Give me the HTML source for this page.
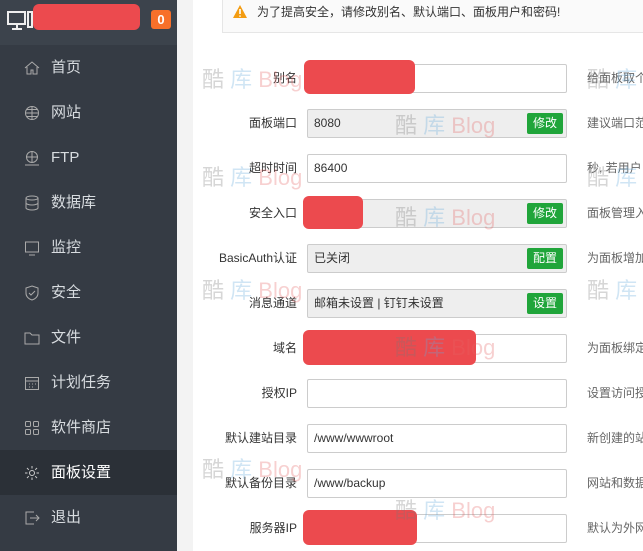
<!DOCTYPE html><html><head><meta charset="utf-8"><style>
*{margin:0;padding:0;box-sizing:border-box}
body{width:643px;height:551px;overflow:hidden;background:#fff;font-family:"Liberation Sans","Noto Sans CJK SC",sans-serif;font-size:13px;color:#333;position:relative}
.sb{position:absolute;left:0;top:0;width:177px;height:551px;background:#353b44}
.hd{position:absolute;left:0;top:0;width:177px;height:45px;background:#3c434c}
.gap{position:absolute;left:177px;top:0;width:16px;height:551px;background:#f3f3f3}
.it{position:absolute;left:0;width:177px;height:45px;color:#d8dce0;font-size:15px;line-height:45px;padding-left:51px}
.it svg{position:absolute;left:24px;top:15px}
.act{background:#2b3037;color:#fff}
.red{position:absolute;background:#ec4a4e;border-radius:6px}
.note{position:absolute;left:222px;top:-1px;width:430px;height:34px;background:#fafafa;border:1px solid #e6e6e6;font-size:12px;line-height:24px;padding-left:34px;color:#333}
.lb{position:absolute;right:346px;font-size:12px;line-height:29px;text-align:right;white-space:nowrap}
.in{position:absolute;left:307px;width:260px;height:29px;border:1px solid #ccc;border-radius:2px;font-size:12px;line-height:27px;padding-left:6px}
.g{background:#eee}
.bt{position:absolute;right:3px;top:3px;width:36px;height:21px;background:#20a53a;color:#fff;border-radius:2px;font-size:12px;line-height:21px;text-align:center}
.h{position:absolute;left:587px;font-size:12px;line-height:29px;white-space:nowrap;color:#666}
.wm{position:absolute;font-size:22px;color:rgba(120,120,120,.3);white-space:nowrap}
.wm span{color:rgba(100,170,220,.3)}.wm b{font-weight:normal;color:rgba(230,100,100,.3)}
</style></head><body>
<div class="sb"></div><div class="hd"></div>
<svg style="position:absolute;left:7px;top:10px" width="26" height="22" viewBox="0 0 26 22" fill="none" stroke="#eee" stroke-width="2"><rect x="1" y="2" width="17" height="12"/><path d="M5 19h10M10 14v5"/><rect x="21" y="2" width="4" height="15"/></svg>
<div class="red" style="left:33px;top:4px;width:107px;height:26px"></div>
<div style="position:absolute;left:151px;top:10px;width:20px;height:19px;background:#f7702a;border-radius:3px;color:#fff;font-weight:bold;font-size:13px;line-height:19px;text-align:center">0</div>
<div class="it" style="top:45px"><svg width="16" height="16" viewBox="0 0 16 16" fill="none" stroke="#aaa"><path d="M1 8L8 2l7 6M3 7v7h4v-4h2v4h4V7"/></svg>首页</div>
<div class="it" style="top:90px"><svg width="16" height="16" viewBox="0 0 16 16" fill="none" stroke="#aaa"><circle cx="8" cy="8" r="6.5"/><path d="M1.5 8h13M8 1.5v13M3 4.5h10M3 11.5h10"/></svg>网站</div>
<div class="it" style="top:135px"><svg width="16" height="16" viewBox="0 0 16 16" fill="none" stroke="#aaa"><circle cx="8" cy="7" r="5.5"/><path d="M2.5 7h11M8 1.5v11M1 15h14"/></svg>FTP</div>
<div class="it" style="top:180px"><svg width="16" height="16" viewBox="0 0 16 16" fill="none" stroke="#aaa"><ellipse cx="8" cy="3" rx="6" ry="2"/><path d="M2 3v10c0 1 3 2 6 2s6-1 6-2V3M2 8c0 1 3 2 6 2s6-1 6-2"/></svg>数据库</div>
<div class="it" style="top:225px"><svg width="16" height="16" viewBox="0 0 16 16" fill="none" stroke="#aaa"><rect x="1.5" y="2" width="13" height="10"/><path d="M5 15h6"/></svg>监控</div>
<div class="it" style="top:270px"><svg width="16" height="16" viewBox="0 0 16 16" fill="none" stroke="#aaa"><path d="M8 1l6 2v5c0 4-3 6-6 7-3-1-6-3-6-7V3z M5 8l2 2 4-4"/></svg>安全</div>
<div class="it" style="top:315px"><svg width="16" height="16" viewBox="0 0 16 16" fill="none" stroke="#aaa"><path d="M1 3h5l2 2h7v9H1z"/></svg>文件</div>
<div class="it" style="top:360px"><svg width="16" height="16" viewBox="0 0 16 16" fill="none" stroke="#aaa"><rect x="1.5" y="2.5" width="13" height="12"/><path d="M1.5 6h13M5 9h1M8 9h1M11 9h1M5 12h1M8 12h1"/></svg>计划任务</div>
<div class="it" style="top:405px"><svg width="16" height="16" viewBox="0 0 16 16" fill="none" stroke="#aaa"><rect x="1.5" y="1.5" width="5" height="5" rx="1"/><rect x="9.5" y="1.5" width="5" height="5" rx="1"/><rect x="1.5" y="9.5" width="5" height="5" rx="1"/><rect x="9.5" y="9.5" width="5" height="5" rx="1"/></svg>软件商店</div>
<div class="it act" style="top:450px"><svg width="16" height="16" viewBox="0 0 16 16" fill="none" stroke="#ccc"><circle cx="8" cy="8" r="2.5"/><path d="M8 1v2.5M8 12.5V15M1 8h2.5M12.5 8H15M3 3l1.8 1.8M11.2 11.2L13 13M3 13l1.8-1.8M11.2 4.8L13 3"/></svg>面板设置</div>
<div class="it" style="top:495px"><svg width="16" height="16" viewBox="0 0 16 16" fill="none" stroke="#aaa"><path d="M10 2H2v12h8M6 8h9M12 5l3 3-3 3"/></svg>退出</div>
<div class="gap"></div>
<div class="note"><svg style="position:absolute;left:10px;top:5px" width="14" height="13" viewBox="0 0 14 13"><path d="M7 0L14 13H0z" fill="#f39c12"/><path d="M7 4v5M7 10.5v1.3" stroke="#fff" stroke-width="1.6"/></svg>为了提高安全，请修改别名、默认端口、面板用户和密码!</div>

<div class="lb" style="top:64px">别名</div><div class="in" style="top:64px"></div><div class="h" style="top:64px">给面板取个</div>
<div class="lb" style="top:109px">面板端口</div><div class="in g" style="top:109px">8080<div class="bt">修改</div></div><div class="h" style="top:109px">建议端口范</div>
<div class="lb" style="top:154px">超时时间</div><div class="in" style="top:154px">86400</div><div class="h" style="top:154px">秒, 若用户</div>
<div class="lb" style="top:199px">安全入口</div><div class="in g" style="top:199px"><div class="bt">修改</div></div><div class="h" style="top:199px">面板管理入</div>
<div class="lb" style="top:244px">BasicAuth认证</div><div class="in g" style="top:244px">已关闭<div class="bt">配置</div></div><div class="h" style="top:244px">为面板增加</div>
<div class="lb" style="top:289px">消息通道</div><div class="in g" style="top:289px">邮箱未设置 | 钉钉未设置<div class="bt">设置</div></div>
<div class="lb" style="top:334px">域名</div><div class="in" style="top:334px"></div><div class="h" style="top:334px">为面板绑定</div>
<div class="lb" style="top:379px">授权IP</div><div class="in" style="top:379px"></div><div class="h" style="top:379px">设置访问授</div>
<div class="lb" style="top:424px">默认建站目录</div><div class="in" style="top:424px">/www/wwwroot</div><div class="h" style="top:424px">新创建的站</div>
<div class="lb" style="top:469px">默认备份目录</div><div class="in" style="top:469px">/www/backup</div><div class="h" style="top:469px">网站和数据</div>
<div class="lb" style="top:514px">服务器IP</div><div class="in" style="top:514px"></div><div class="h" style="top:514px">默认为外网</div>

<div class="red" style="left:304px;top:60px;width:111px;height:34px"></div>
<div class="red" style="left:303px;top:196px;width:60px;height:33px"></div>
<div class="red" style="left:303px;top:330px;width:173px;height:35px"></div>
<div class="red" style="left:303px;top:510px;width:114px;height:35px"></div>

<div class="wm" style="left:202px;top:62px">酷 <span>库</span> <b>Blog</b></div>
<div class="wm" style="left:395px;top:108px">酷 <span>库</span> <b>Blog</b></div>
<div class="wm" style="left:202px;top:160px">酷 <span>库</span> <b>Blog</b></div>
<div class="wm" style="left:395px;top:200px">酷 <span>库</span> <b>Blog</b></div>
<div class="wm" style="left:202px;top:273px">酷 <span>库</span> <b>Blog</b></div>
<div class="wm" style="left:395px;top:330px">酷 <span>库</span> <b>Blog</b></div>
<div class="wm" style="left:202px;top:452px">酷 <span>库</span> <b>Blog</b></div>
<div class="wm" style="left:395px;top:493px">酷 <span>库</span> <b>Blog</b></div>
<div class="wm" style="left:587px;top:62px">酷 <span>库</span></div>
<div class="wm" style="left:587px;top:160px">酷 <span>库</span></div>
<div class="wm" style="left:587px;top:273px">酷 <span>库</span></div>
</body></html>
